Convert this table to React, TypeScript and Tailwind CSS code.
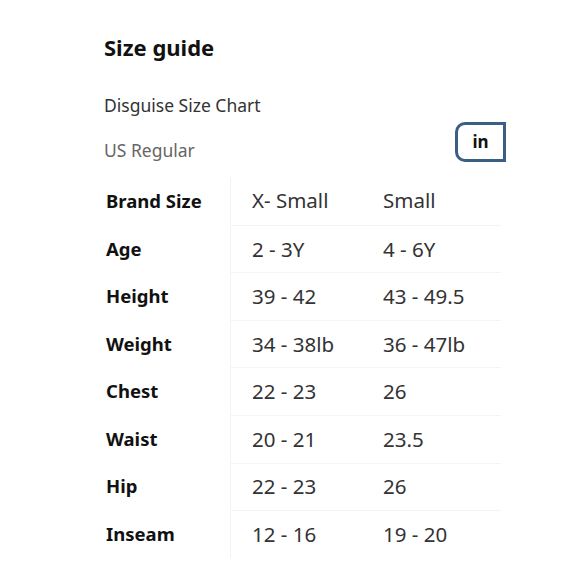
import React from 'react';

const rows = [
  ['Brand Size', 'X- Small', 'Small'],
  ['Age', '2 - 3Y', '4 - 6Y'],
  ['Height', '39 - 42', '43 - 49.5'],
  ['Weight', '34 - 38lb', '36 - 47lb'],
  ['Chest', '22 - 23', '26'],
  ['Waist', '20 - 21', '23.5'],
  ['Hip', '22 - 23', '26'],
  ['Inseam', '12 - 16', '19 - 20'],
];

export default function App() {
  return (
    <div className="w-[580px] h-[580px] bg-white overflow-hidden" style={{ fontFamily: '"Noto Sans", "Open Sans", sans-serif' }}>
      <div className="pl-[104px] pt-[33px]">
        <h1 className="text-[22px] font-bold text-[#111] leading-[28px]">Size guide</h1>
        <div className="mt-[32px] text-[17.5px] text-[#333] leading-[24px]">Disguise Size Chart</div>
        <div className="flex items-end justify-between w-[402px] mt-[5px]">
          <div className="text-[17.5px] text-[#666] leading-[24px]">US Regular</div>
          <button className="w-[51px] h-[40px] border-[3px] border-[#3b5f84] rounded-l-[10px] flex items-center justify-center text-[17px] font-bold text-[#111]">
            in
          </button>
        </div>
        <div className="mt-[15px] flex">
          <div className="w-[126px] flex flex-col">
            {rows.map((r) => (
              <div key={r[0]} className="h-[47.6px] flex items-center pl-[2px] text-[18.5px] font-bold text-[#111]">
                {r[0]}
              </div>
            ))}
          </div>
          <div className="border-l border-[#f2f2f2] flex flex-col">
            {rows.map((r, i) => (
              <div
                key={r[0]}
                className={`h-[47.6px] w-[270px] flex items-center text-[20.5px] text-[#333] ${i > 0 ? 'border-t border-[#f4f4f4]' : ''}`}
              >
                <div className="w-[152px] pl-[21px]">{r[1]}</div>
                <div>{r[2]}</div>
              </div>
            ))}
          </div>
        </div>
      </div>
    </div>
  );
}
